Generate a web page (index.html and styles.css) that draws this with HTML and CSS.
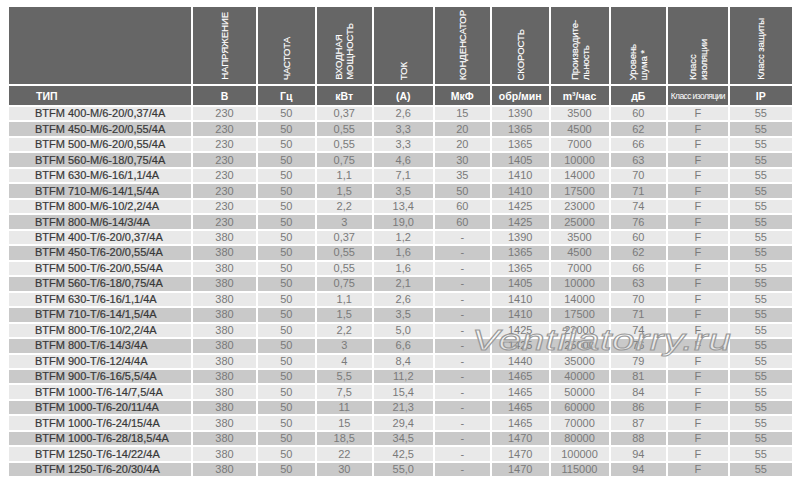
FILE: index.html
```html
<!DOCTYPE html>
<html lang="ru">
<head>
<meta charset="utf-8">
<title>BTFM</title>
<link rel="stylesheet" href="styles.css">
</head>
<body>
<div class="wrap">
<table class="spec">
<colgroup>
<col class="c-type"><col class="c-v"><col class="c-hz"><col class="c-kw"><col class="c-a"><col class="c-mf"><col class="c-rpm"><col class="c-m3"><col class="c-db"><col class="c-ins"><col class="c-ip">
</colgroup>
<thead>
<tr class="h1">
<th><div class="hc"></div></th>
<th><div class="hc"><div class="v">НАПРЯЖЕНИЕ</div></div></th>
<th><div class="hc"><div class="v">ЧАСТОТА</div></div></th>
<th><div class="hc"><div class="v">ВХОДНАЯ<br>МОЩНОСТЬ</div></div></th>
<th><div class="hc"><div class="v">ТОК</div></div></th>
<th><div class="hc"><div class="v">КОНДЕНСАТОР</div></div></th>
<th><div class="hc"><div class="v">СКОРОСТЬ</div></div></th>
<th><div class="hc"><div class="v">Производите-<br>льность</div></div></th>
<th><div class="hc"><div class="v">Уровень<br>шума *</div></div></th>
<th><div class="hc"><div class="v">Класс<br>изоляции</div></div></th>
<th><div class="hc"><div class="v">Класс защиты</div></div></th>
</tr>
<tr class="h2">
<th class="type">ТИП</th>
<th>В</th>
<th>Гц</th>
<th>кВт</th>
<th>(A)</th>
<th>МкФ</th>
<th>обр/мин</th>
<th>m³/час</th>
<th>дБ</th>
<th class="tiny">Класс изоляции</th>
<th>IP</th>
</tr>
</thead>
<tbody>
<tr><td class="type">BTFM 400-M/6-20/0,37/4A</td><td>230</td><td>50</td><td>0,37</td><td>2,6</td><td>15</td><td>1390</td><td>3500</td><td>60</td><td>F</td><td>55</td></tr>
<tr><td class="type">BTFM 450-M/6-20/0,55/4A</td><td>230</td><td>50</td><td>0,55</td><td>3,3</td><td>20</td><td>1365</td><td>4500</td><td>62</td><td>F</td><td>55</td></tr>
<tr><td class="type">BTFM 500-M/6-20/0,55/4A</td><td>230</td><td>50</td><td>0,55</td><td>3,3</td><td>20</td><td>1365</td><td>7000</td><td>66</td><td>F</td><td>55</td></tr>
<tr><td class="type">BTFM 560-M/6-18/0,75/4A</td><td>230</td><td>50</td><td>0,75</td><td>4,6</td><td>30</td><td>1405</td><td>10000</td><td>63</td><td>F</td><td>55</td></tr>
<tr><td class="type">BTFM 630-M/6-16/1,1/4A</td><td>230</td><td>50</td><td>1,1</td><td>7,1</td><td>35</td><td>1410</td><td>14000</td><td>70</td><td>F</td><td>55</td></tr>
<tr><td class="type">BTFM 710-M/6-14/1,5/4A</td><td>230</td><td>50</td><td>1,5</td><td>3,5</td><td>50</td><td>1410</td><td>17500</td><td>71</td><td>F</td><td>55</td></tr>
<tr><td class="type">BTFM 800-M/6-10/2,2/4A</td><td>230</td><td>50</td><td>2,2</td><td>13,4</td><td>60</td><td>1425</td><td>23000</td><td>74</td><td>F</td><td>55</td></tr>
<tr><td class="type">BTFM 800-M/6-14/3/4A</td><td>230</td><td>50</td><td>3</td><td>19,0</td><td>60</td><td>1425</td><td>25000</td><td>76</td><td>F</td><td>55</td></tr>
<tr><td class="type">BTFM 400-T/6-20/0,37/4A</td><td>380</td><td>50</td><td>0,37</td><td>1,2</td><td>-</td><td>1390</td><td>3500</td><td>60</td><td>F</td><td>55</td></tr>
<tr><td class="type">BTFM 450-T/6-20/0,55/4A</td><td>380</td><td>50</td><td>0,55</td><td>1,6</td><td>-</td><td>1365</td><td>4500</td><td>62</td><td>F</td><td>55</td></tr>
<tr><td class="type">BTFM 500-T/6-20/0,55/4A</td><td>380</td><td>50</td><td>0,55</td><td>1,6</td><td>-</td><td>1365</td><td>7000</td><td>66</td><td>F</td><td>55</td></tr>
<tr><td class="type">BTFM 560-T/6-18/0,75/4A</td><td>380</td><td>50</td><td>0,75</td><td>2,1</td><td>-</td><td>1405</td><td>10000</td><td>63</td><td>F</td><td>55</td></tr>
<tr><td class="type">BTFM 630-T/6-16/1,1/4A</td><td>380</td><td>50</td><td>1,1</td><td>2,6</td><td>-</td><td>1410</td><td>14000</td><td>70</td><td>F</td><td>55</td></tr>
<tr><td class="type">BTFM 710-T/6-14/1,5/4A</td><td>380</td><td>50</td><td>1,5</td><td>3,5</td><td>-</td><td>1410</td><td>17500</td><td>71</td><td>F</td><td>55</td></tr>
<tr><td class="type">BTFM 800-T/6-10/2,2/4A</td><td>380</td><td>50</td><td>2,2</td><td>5,0</td><td>-</td><td>1425</td><td>23000</td><td>74</td><td>F</td><td>55</td></tr>
<tr><td class="type">BTFM 800-T/6-14/3/4A</td><td>380</td><td>50</td><td>3</td><td>6,6</td><td>-</td><td>1425</td><td>25000</td><td>76</td><td>F</td><td>55</td></tr>
<tr><td class="type">BTFM 900-T/6-12/4/4A</td><td>380</td><td>50</td><td>4</td><td>8,4</td><td>-</td><td>1440</td><td>35000</td><td>79</td><td>F</td><td>55</td></tr>
<tr><td class="type">BTFM 900-T/6-16/5,5/4A</td><td>380</td><td>50</td><td>5,5</td><td>11,2</td><td>-</td><td>1465</td><td>40000</td><td>81</td><td>F</td><td>55</td></tr>
<tr><td class="type">BTFM 1000-T/6-14/7,5/4A</td><td>380</td><td>50</td><td>7,5</td><td>15,4</td><td>-</td><td>1465</td><td>50000</td><td>84</td><td>F</td><td>55</td></tr>
<tr><td class="type">BTFM 1000-T/6-20/11/4A</td><td>380</td><td>50</td><td>11</td><td>21,3</td><td>-</td><td>1465</td><td>60000</td><td>86</td><td>F</td><td>55</td></tr>
<tr><td class="type">BTFM 1000-T/6-24/15/4A</td><td>380</td><td>50</td><td>15</td><td>29,4</td><td>-</td><td>1465</td><td>70000</td><td>87</td><td>F</td><td>55</td></tr>
<tr><td class="type">BTFM 1000-T/6-28/18,5/4A</td><td>380</td><td>50</td><td>18,5</td><td>34,5</td><td>-</td><td>1470</td><td>80000</td><td>88</td><td>F</td><td>55</td></tr>
<tr><td class="type">BTFM 1250-T/6-14/22/4A</td><td>380</td><td>50</td><td>22</td><td>42,5</td><td>-</td><td>1470</td><td>100000</td><td>94</td><td>F</td><td>55</td></tr>
<tr><td class="type">BTFM 1250-T/6-20/30/4A</td><td>380</td><td>50</td><td>30</td><td>55,0</td><td>-</td><td>1470</td><td>115000</td><td>94</td><td>F</td><td>55</td></tr>
</tbody>
</table>
<div class="watermark">Ventilatorry.ru</div>
</div>
</body>
</html>
```
FILE: styles.css
```css
html, body {
  margin: 0;
  padding: 0;
  background: #ffffff;
}

body {
  font-family: "Liberation Sans", Arial, sans-serif;
}

.wrap {
  position: relative;
  padding: 5px 0 0 7px;
}

.spec {
  border-collapse: separate;
  border-spacing: 2px;
  table-layout: fixed;
  width: 787px;
}

.c-type { width: 182px; }
.c-v { width: 63px; }
.c-hz { width: 56.5px; }
.c-kw { width: 55.5px; }
.c-a { width: 58.5px; }
.c-mf { width: 55.5px; }
.c-rpm { width: 56.5px; }
.c-m3 { width: 58px; }
.c-db { width: 55.5px; }
.c-ins { width: 59.5px; }
.c-ip { width: 62.5px; }

.spec th {
  background: #666666;
  color: #ffffff;
  padding: 0;
}

.h1 th {
  vertical-align: bottom;
}

.hc {
  height: 77px;
  box-sizing: border-box;
  padding-bottom: 4px;
  display: flex;
  align-items: flex-end;
  justify-content: center;
}

.v {
  writing-mode: vertical-rl;
  transform: rotate(180deg);
  text-align: left;
  font-size: 9.6px;
  line-height: 11px;
  font-weight: normal;
  letter-spacing: -0.1px;
  white-space: nowrap;
  -webkit-text-stroke: 0.15px #ffffff;
}

.h2 th {
  height: 19px;
  font-size: 10.5px;
  line-height: 12px;
  font-weight: bold;
  text-align: center;
  vertical-align: middle;
}

.h2 th.type {
  text-align: left;
  padding-left: 27px;
}

.h2 th.tiny {
  font-size: 8.5px;
  letter-spacing: -0.6px;
  font-weight: normal;
  white-space: nowrap;
}

.spec td {
  height: 13.48px;
  padding: 0;
  font-size: 11px;
  line-height: 13px;
  color: #7a7a7a;
  text-align: center;
  vertical-align: middle;
  white-space: nowrap;
}

.spec tbody tr:nth-child(odd) td {
  background: #e9e9e9;
}

.spec tbody tr:nth-child(even) td {
  background: #c9c9c9;
}

.spec td.type {
  text-align: left;
  padding-left: 26px;
  color: #383838;
  -webkit-text-stroke: 0.2px #383838;
}

.watermark {
  position: absolute;
  left: 472px;
  top: 322px;
  font-family: "Liberation Sans", Arial, sans-serif;
  font-style: italic;
  font-size: 30px;
  line-height: 36px;
  letter-spacing: 0.5px;
  color: rgba(255, 255, 255, 0.55);
  -webkit-text-stroke: 1px #999999;
  transform: scaleX(1.36);
  transform-origin: left top;
  white-space: nowrap;
  pointer-events: none;
}
```
